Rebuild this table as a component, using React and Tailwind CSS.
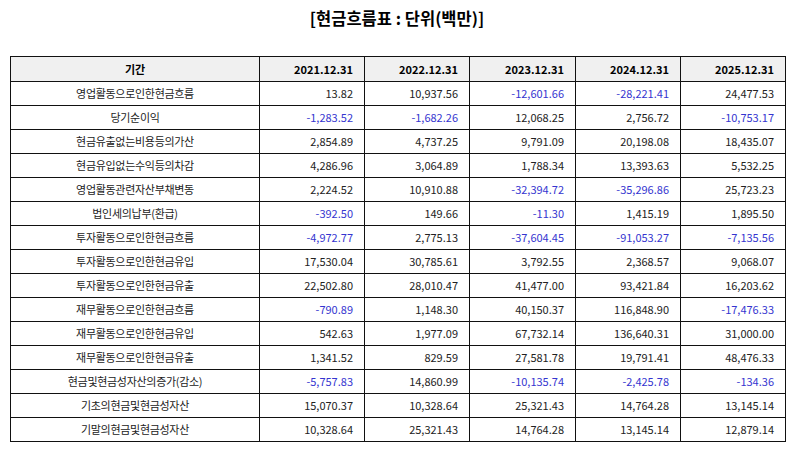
import React from 'react';

const years = ['2021.12.31', '2022.12.31', '2023.12.31', '2024.12.31', '2025.12.31'];

const rows = [
  ['영업활동으로인한현금흐름', '13.82', '10,937.56', '-12,601.66', '-28,221.41', '24,477.53'],
  ['당기순이익', '-1,283.52', '-1,682.26', '12,068.25', '2,756.72', '-10,753.17'],
  ['현금유출없는비용등의가산', '2,854.89', '4,737.25', '9,791.09', '20,198.08', '18,435.07'],
  ['현금유입없는수익등의차감', '4,286.96', '3,064.89', '1,788.34', '13,393.63', '5,532.25'],
  ['영업활동관련자산부채변동', '2,224.52', '10,910.88', '-32,394.72', '-35,296.86', '25,723.23'],
  ['법인세의납부(환급)', '-392.50', '149.66', '-11.30', '1,415.19', '1,895.50'],
  ['투자활동으로인한현금흐름', '-4,972.77', '2,775.13', '-37,604.45', '-91,053.27', '-7,135.56'],
  ['투자활동으로인한현금유입', '17,530.04', '30,785.61', '3,792.55', '2,368.57', '9,068.07'],
  ['투자활동으로인한현금유출', '22,502.80', '28,010.47', '41,477.00', '93,421.84', '16,203.62'],
  ['재무활동으로인한현금흐름', '-790.89', '1,148.30', '40,150.37', '116,848.90', '-17,476.33'],
  ['재무활동으로인한현금유입', '542.63', '1,977.09', '67,732.14', '136,640.31', '31,000.00'],
  ['재무활동으로인한현금유출', '1,341.52', '829.59', '27,581.78', '19,791.41', '48,476.33'],
  ['현금및현금성자산의증가(감소)', '-5,757.83', '14,860.99', '-10,135.74', '-2,425.78', '-134.36'],
  ['기초의현금및현금성자산', '15,070.37', '10,328.64', '25,321.43', '14,764.28', '13,145.14'],
  ['기말의현금및현금성자산', '10,328.64', '25,321.43', '14,764.28', '13,145.14', '12,879.14'],
];

function App() {
  return (
    <div
      className="w-[794px] h-[452px] bg-white text-[#222]"
      style={{ fontFamily: '"Noto Sans CJK KR", "Noto Sans", sans-serif' }}
    >
      {/* title */}
      <div className="pt-[7px] h-[56px] text-center text-[16.5px] font-bold leading-[22px] text-black">
        [현금흐름표 : 단위(백만)]
      </div>

      <table className="ml-[10px] w-[775px] border-collapse table-fixed text-[11px]">
        <colgroup>
          <col className="w-[249px]" />
          <col className="w-[105px]" />
          <col className="w-[105px]" />
          <col className="w-[106px]" />
          <col className="w-[105px]" />
          <col className="w-[105px]" />
        </colgroup>
        <thead>
          <tr className="h-[25px] bg-[#f0f0f0]">
            <th className="border border-[#111] text-center font-bold text-black">기간</th>
            {years.map((y) => (
              <th key={y} className="border border-[#111] text-right pr-[11px] font-bold text-black">
                {y}
              </th>
            ))}
          </tr>
        </thead>
        <tbody>
          {rows.map((r) => (
            <tr key={r[0]} className="h-[24px]">
              <td className="border border-[#111] text-center tracking-[-0.3px]">{r[0]}</td>
              {r.slice(1).map((v, i) => (
                <td
                  key={i}
                  className={
                    'border border-[#111] text-right pr-[11px] ' +
                    (v.startsWith('-') ? 'text-[#3535d0]' : '')
                  }
                >
                  {v}
                </td>
              ))}
            </tr>
          ))}
        </tbody>
      </table>
    </div>
  );
}

export default App;
